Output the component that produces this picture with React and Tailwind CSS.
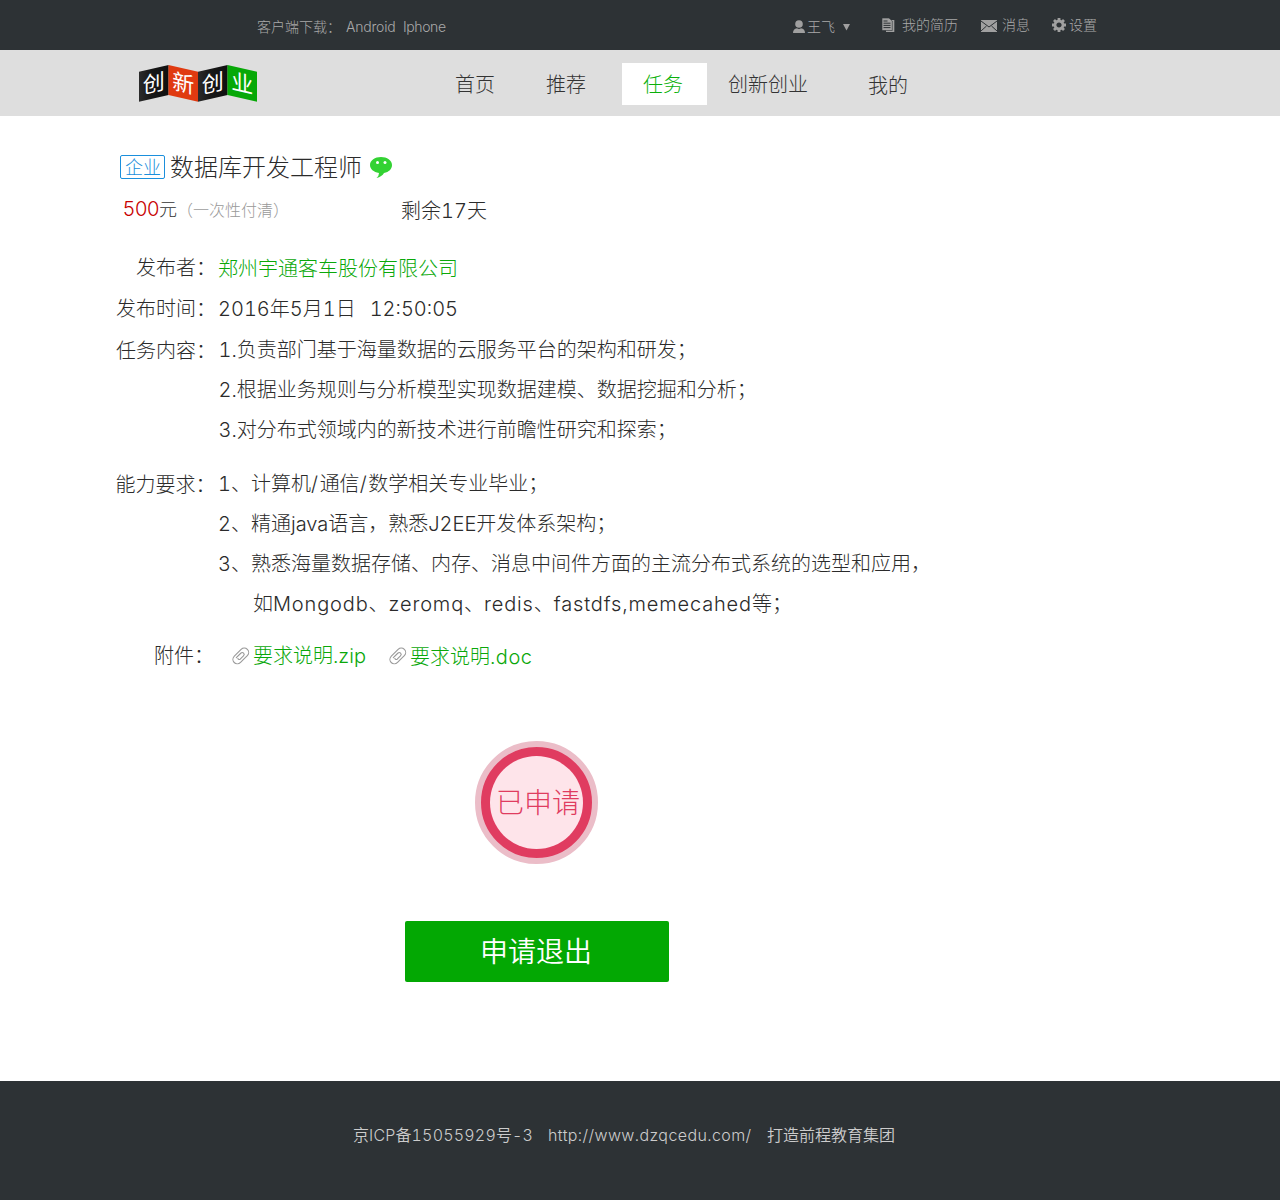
import React from "react";

const font = "font-['Inter','Noto_Sans_CJK_SC',sans-serif] font-light tabular-nums";

// Full-width punctuation takes the Chinese face; Latin runs get their own tracking.
function T({ children, latin = "tracking-normal" }) {
  return children.split(/([：；，（）]|[A-Za-z0-9.:/,\-]+)/).map((s, i) => {
    if (i % 2 === 0) return s;
    return /[：；，（）]/.test(s) ? (
      <span key={i} lang="zh-CN" className="font-['Noto_Sans_CJK_SC',sans-serif] leading-none">{s}</span>
    ) : (
      <span key={i} className={latin}>{s}</span>
    );
  });
}

function Logo() {
  const chars = [
    { c: "创", x: 0, fill: "url(#dark)", up: true },
    { c: "新", x: 29.5, fill: "#e03a10", up: false },
    { c: "创", x: 59, fill: "url(#dark)", up: true },
    { c: "业", x: 88.5, fill: "#07a807", up: false },
  ];
  return (
    <svg width="118" height="38" viewBox="0 0 118 38" className="block">
      <defs>
        <linearGradient id="dark" x1="0" x2="1" y1="0" y2="0">
          <stop offset="0" stopColor="#2b2b2b" />
          <stop offset="0.4" stopColor="#181818" />
          <stop offset="1" stopColor="#101010" />
        </linearGradient>
      </defs>
      {chars.map((p, i) => (
        <g key={i} transform={`translate(${p.x} ${p.up ? 7.8 : 1}) skewY(${p.up ? -13 : 13})`}>
          <rect width="29.6" height="30" fill={p.fill} />
          <text x="14.8" y="22.8" textAnchor="middle" fill="#fff" className="font-['Noto_Sans_CJK_SC',sans-serif] text-[22px] font-normal">
            {p.c}
          </text>
        </g>
      ))}
    </svg>
  );
}

function Clip() {
  return (
    <svg width="18" height="18" viewBox="0 0 18 18" fill="none" stroke="#999" strokeWidth="1.1" strokeLinecap="round" className="block shrink-0">
      <g transform="translate(8.700 9) rotate(45)">
        <path d="M4.400 2.500 V4.600 A4.400 4.600 0 0 1 -4.400 4.600 V-5 A4.400 4.400 0 0 1 4.400 -5 V-1 M4.400 2.500 V-1" />
        <path d="M-1.900 4.300 V-2 A1.900 2.100 0 0 1 1.900 -2 V2.600 A1.500 1.600 0 0 1 -.200 3.800" />
      </g>
    </svg>
  );
}

function TopBar() {
  return (
    <div className="flex h-[50px] shrink-0 bg-[#2d3235] text-sm leading-5 text-[#a9a9a9]">
      <div className="ml-[257px] mt-[17px] flex w-[536px] whitespace-pre">
        <span className="w-[89px]"><T>客户端下载：</T></span>
        <span className="w-[57px] tracking-[-0.2px]">Android</span>
        <span className="tracking-[-0.4px]">Iphone</span>
      </div>
      <div className="mt-[17px] flex w-[88px]">
        <svg width="12" height="14" viewBox="0 0 12 14" fill="#a0a0a0" className="mt-[3px] mr-[2px]">
          <circle cx="6" cy="4" r="3.8" />
          <path d="M0 13 q0-4 4-4.7 q2 1.2 4 0 q4 .7 4 4.7z" />
        </svg>
        <span>王飞</span>
        <svg width="7" height="7" viewBox="0 0 7 7" fill="#a0a0a0" className="ml-2 mt-[7px]">
          <path d="M0 0H7L3.5 6.5z" />
        </svg>
      </div>
      <div className="mt-[15px] flex w-[100px]">
        <svg width="14" height="16" viewBox="0 0 14 16" className="mt-[2px] mr-[6px] ml-[1px]">
          <path d="M9 3h3.3v12H4v-2" fill="#a0a0a0" />
          <path d="M0 1h7l3.3 3v9.5H0z" fill="#a0a0a0" stroke="#2d3235" strokeWidth=".6" />
          <path d="M1.5 4h4M1.5 6.2h7M1.5 8.4h7M1.5 10.6h7" stroke="#2d3235" />
        </svg>
        <span>我的简历</span>
      </div>
      <div className="mt-[15px] flex w-[71px]">
        <svg width="16" height="12" viewBox="0 0 16 12" className="mt-[5px] mr-[5px]">
          <rect width="16" height="12" fill="#a0a0a0" />
          <path d="M0 1l8 6 8-6M0 11l5.5-5M16 11l-5.500-5" stroke="#2d3235" fill="none" />
        </svg>
        <span>消息</span>
      </div>
      <div className="mt-[15px] flex">
        <svg width="14" height="14" viewBox="-7 -7 14 14" className="mt-[3px] mr-[3px]" stroke="#a0a0a0">
          <circle r="4" fill="none" strokeWidth="2.800" />
          <path d="M0-7V-4M0 7V4M-7 0H-4M7 0H4M-5-5l2 2M5 5l-2-2M-5 5l2-2M5-5l-2 2" strokeWidth="2.800" />
        </svg>
        <span>设置</span>
      </div>
    </div>
  );
}

function Nav() {
  return (
    <div className="flex h-[66px] shrink-0 bg-[#dedede] text-xl leading-[44px] text-[#333]">
      <div className="ml-[139px] mt-[14px] w-[316px]"><Logo /></div>
      <nav className="mt-[13px] flex whitespace-nowrap">
        <a className="w-[91px]">首页</a>
        <a className="w-[76px]">推荐</a>
        <a className="h-[42px] w-[85px] bg-white pl-[21px] text-[#0ab00a]">任务</a>
        <a className="ml-[21px] w-[140px]">创新创业</a>
        <a className="mt-px">我的</a>
      </nav>
    </div>
  );
}

function Row({ label, children, className, labelClass }) {
  return (
    <div className={`flex whitespace-pre text-xl leading-10 ${className || ""}`}>
      <div className={`w-[216px] shrink-0 text-right ${labelClass || ""}`}><T>{label}</T></div>
      <div className="ml-[2px]">{children}</div>
    </div>
  );
}

export default function App() {
  return (
    <div className={`flex h-[1200px] w-[1280px] flex-col overflow-hidden bg-white text-[#2b2b2b] ${font}`}>
      <TopBar />
      <Nav />
      <main className="h-[965px] shrink-0">
        <div className="flex pt-[35px] whitespace-nowrap">
          <span className="mt-[4px] ml-[120px] h-6 w-[45px] rounded-[2px] border border-[#1b8fdc] pl-px text-center text-lg leading-[24px] text-[#1b8fdc]">企业</span>
          <h1 className="ml-[5px] text-2xl leading-[34px]">数据库开发工程师</h1>
          <svg width="23" height="23" viewBox="0 0 23 23" className="mt-[5px] ml-2">
            <path d="M11 1C5 1 0 4.300 0 9c0 4 3.500 7 9 8q0 3-2.500 5 5.500-1.500 7.500-5c5-1 8-4 8-8 0-4.700-5-8-11-8z" fill="#33d233" />
            <circle cx="7.500" cy="6.500" r="1.500" fill="#fff" />
            <circle cx="15" cy="6.500" r="1.500" fill="#fff" />
          </svg>
        </div>
        <div className="mt-[8px] flex h-9 whitespace-nowrap text-xl leading-9">
          <div className="ml-[122.500px] w-[54.500px] leading-8 text-[#c80000]"><span className="tracking-[-0.800px]">500</span><span className="text-lg text-[#333]">元</span></div>
          <div className="w-[224px] text-base leading-[35px] text-[#999]"><T>（一次性付清）</T></div>
          <div><T>剩余17天</T></div>
        </div>
        <Row className="mt-[20px]" labelClass="-mt-px" label="发布者："><span className="text-[#0aa80a]">郑州宇通客车股份有限公司</span></Row>
        <Row label="发布时间："><T>2016年5月1日</T><span className="ml-[14px]"><T>12:50:05</T></span></Row>
        <Row className="mt-px" labelClass="pt-px" label="任务内容：">
          <div className="pl-[0.500px]">
            <p><T>1.负责部门基于海量数据的云服务平台的架构和研发；</T></p>
            <p><T>2.根据业务规则与分析模型实现数据建模、数据挖掘和分析；</T></p>
            <p><T>3.对分布式领域内的新技术进行前瞻性研究和探索；</T></p>
          </div>
        </Row>
        <Row className="mt-[14px]" labelClass="pr-[0.500px] pt-px" label="能力要求：">
          <p>1、计算机<span className="tracking-[1.700px]">/</span>通信<span className="tracking-[1.700px]">/</span><T>数学相关专业毕业；</T></p>
          <p><T>2、精通java语言，熟悉J2EE开发体系架构；</T></p>
          <p><T>3、熟悉海量数据存储、内存、消息中间件方面的主流分布式系统的选型和应用，</T></p>
          <p className="pl-[35px]"><T latin="tracking-[0.850px]">如Mongodb、zeromq、redis、fastdfs,memecahed等；</T></p>
        </Row>
        <Row className="mt-[12px]" labelClass="pr-[2px]" label="附件：">
          <div className="flex h-10 items-start text-[#0aa80a]">
            <div className="ml-[14px] flex w-[157px] items-center gap-[3px]"><Clip />要求说明.zip</div>
            <div className="flex items-center gap-[3px]"><Clip /><span className="-mb-px pt-px"><T latin="tracking-[0.500px]">要求说明.doc</T></span></div>
          </div>
        </Row>
        <div className="mt-[65px] ml-[475px] flex size-[123px] items-center justify-center rounded-full border-[6px] border-[#ebbdc8] bg-[#e03c60]">
          <div className="flex size-[93px] items-center justify-center rounded-full bg-[#fee4ea] pl-[3px] whitespace-nowrap text-[28px] text-[#e03c60]">已申请</div>
        </div>
        <button className="mt-[57px] ml-[405px] block h-[61px] w-[264px] rounded-[2px] bg-[#03a803] pr-[2px] pt-px text-[28px] leading-[61px] font-[350] text-white">申请退出</button>
      </main>
      <footer className="flex h-[119px] shrink-0 bg-[#2d3235] pt-[42px] pl-[353px] whitespace-nowrap text-base leading-6 font-[350] text-[#ccc]">
        <span className="w-[195px]"><T latin="tracking-[0.200px]">京ICP备15055929号-3</T></span>
        <span className="w-[219px]"><T latin="tracking-[0.400px]">http://www.dzqcedu.com/</T></span>
        <span>打造前程教育集团</span>
      </footer>
    </div>
  );
}
